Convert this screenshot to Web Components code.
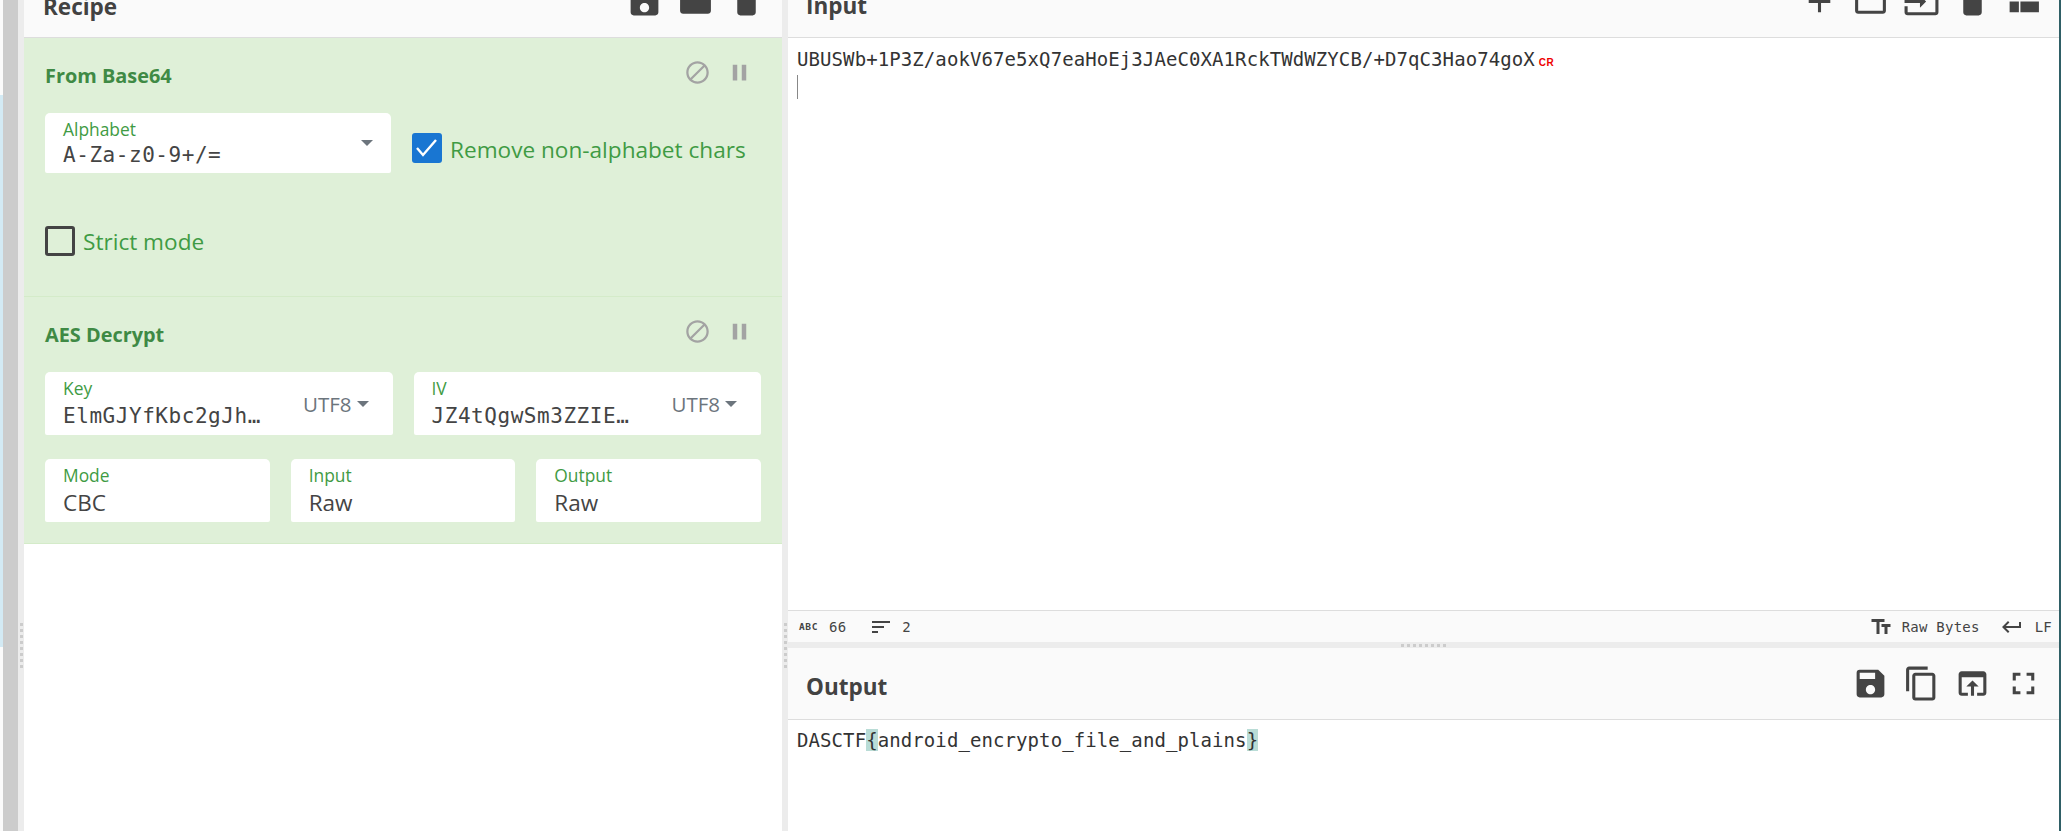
<!DOCTYPE html>
<html>
<head>
<meta charset="utf-8">
<title>CyberChef</title>
<style>
html,body{margin:0;padding:0;height:100%;overflow:hidden;background:#fff}
body{display:flex;width:2061px;height:831px;font-family:"Open Sans","Liberation Sans",sans-serif;color:#444}
</style>
</head>
<body>
<cc-edge></cc-edge>
<cc-gutter></cc-gutter>
<cc-recipe></cc-recipe>
<cc-gutter></cc-gutter>
<cc-io></cc-io>

<script>
// icon paths
const ICONS={
  save:"M17 3H5a2 2 0 0 0-2 2v14c0 1.1.9 2 2 2h14c1.1 0 2-.9 2-2V7l-4-4zm-5 16c-1.66 0-3-1.34-3-3s1.34-3 3-3 3 1.34 3 3-1.34 3-3 3zm3-10H5V5h10v4z",
  folder:"M10 4H4c-1.1 0-1.99.9-1.99 2L2 18c0 1.1.9 2 2 2h16c1.1 0 2-.9 2-2V8c0-1.1-.9-2-2-2h-8l-2-2z",
  trash:"M6 19c0 1.1.9 2 2 2h8c1.1 0 2-.9 2-2V7H6v12zM19 4h-3.5l-1-1h-5l-1 1H5v2h14V4z",
  add:"M19 13h-6v6h-2v-6H5v-2h6V5h2v6h6v2z",
  folderOpen:"M20 6h-8l-2-2H4c-1.1 0-1.99.9-1.99 2L2 18c0 1.1.9 2 2 2h16c1.1 0 2-.9 2-2V8c0-1.1-.9-2-2-2zm0 12H4V8h16v10z",
  input:"M21 3.01H3c-1.1 0-2 .9-2 2V9h2V4.99h18v14.03H3V15H1v4.01c0 1.1.9 1.98 2 1.98h18c1.1 0 2-.88 2-1.98v-14c0-1.1-.9-2-2-2zM11 16l4-4-4-4v3H1v2h10v3z",
  compact:"M3 19h6v-7H3v7zm7 0h12v-7H10v7zM3 5v6h19V5H3z",
  copy:"M16 1H4c-1.1 0-2 .9-2 2v14h2V3h12V1zm3 4H8c-1.1 0-2 .9-2 2v14c0 1.1.9 2 2 2h11c1.1 0 2-.9 2-2V7c0-1.1-.9-2-2-2zm0 16H8V7h11v14z",
  open:"M19 4H5c-1.11 0-2 .9-2 2v12c0 1.1.89 2 2 2h4v-2H5V8h14v10h-4v2h4c1.1 0 2-.9 2-2V6c0-1.1-.89-2-2-2zm-7 6l-4 4h3v6h2v-6h3l-4-4z",
  full:"M7 14H5v5h5v-2H7v-3zm-2-4h2V7h3V5H5v5zm12 7h-3v2h5v-5h-2v3zM14 5v2h3v3h2V5h-5z",
  disable:"M12 2C6.48 2 2 6.48 2 12s4.48 10 10 10 10-4.48 10-10S17.52 2 12 2zM4 12c0-4.42 3.58-8 8-8 1.85 0 3.55.63 4.9 1.69L5.69 16.9C4.63 15.55 4 13.85 4 12zm8 8c-1.85 0-3.55-.63-4.9-1.69L18.31 7.1C19.37 8.45 20 10.15 20 12c0 4.42-3.58 8-8 8z",
  pause:"M6 19h4V5H6v14zm8-14v14h4V5h-4z",
  lines:"M3 18h6v-2H3v2zM3 6v2h18V6H3zm0 7h12v-2H3v2z",
  textFields:"M2.5 4v3h5v12h3V7h5V4h-13zm19 5h-9v3h3v7h3v-7h3V9z",
  ret:"M19 7v4H5.83l3.58-3.59L8 6l-6 6 6 6 1.41-1.41L5.83 13H21V7z"
};

class CcIcon extends HTMLElement{
    connectedCallback(){
        const size=this.getAttribute("size")||37;
        const fill=this.getAttribute("fill")||"#444";
        this.attachShadow({mode:"open"}).innerHTML=`
        <style>:host{display:block;flex:none;width:${size}px;height:${size}px}svg{display:block}</style>
        <svg width="${size}" height="${size}" viewBox="0 0 24 24" fill="${fill}"><path d="${ICONS[this.getAttribute("name")]}"/></svg>`;
    }
}

// far left: the window behind the browser
class CcEdge extends HTMLElement{
    constructor(){
        super();
        this.attachShadow({mode:"open"}).innerHTML=`
        <style>
        :host{display:flex;flex:none;width:18px;height:831px}
        .stripe{width:3px;display:flex;flex-direction:column}
        .top{height:95px;background:#fbfbfb}
        .mid{height:552px;background:#d3eaf4}
        .low{flex:1;background:#fbfbfb}
        .bar{flex:1;background:#ccc}
        </style>
        <div class="stripe"><div class="top"></div><div class="mid"></div><div class="low"></div></div>
        <div class="bar"></div>`;
    }
}

class CcGutter extends HTMLElement{
    constructor(){
        super();
        this.attachShadow({mode:"open"}).innerHTML=`
        <style>
        :host{display:flex;flex:none;width:6px;height:831px;background:#ececec;align-items:flex-start;justify-content:center}
        .dots{margin-top:623px;width:3px;height:45px;background:repeating-linear-gradient(to bottom,#ccc 0 3px,transparent 3px 6px)}
        </style>
        <div class="dots"></div>`;
    }
}

// header bar of a panel, bottom aligned so the top can be cut by the window
class CcHeader extends HTMLElement{
    constructor(){
        super();
        this.attachShadow({mode:"open"}).innerHTML=`
        <style>
        :host{display:flex;flex:none;box-sizing:border-box;height:var(--h,38px);background:#fafafa;border-bottom:1px solid #ddd;overflow:hidden;
              justify-content:space-between;align-items:flex-end;padding:0 var(--pr,17px) 0 var(--pl,19px)}
        .title{font:700 22.5px/28px "Open Sans",sans-serif;color:#424242;margin-bottom:var(--tb,16px)}
        .btns{display:flex;gap:14px;margin-bottom:var(--ib,17px)}
        </style>
        <div class="title"><slot name="title"></slot></div>
        <div class="btns"><slot></slot></div>`;
    }
}

class CcField extends HTMLElement{
    constructor(){
        super();
        this.attachShadow({mode:"open"}).innerHTML=`
        <style>
        :host{display:flex;box-sizing:border-box;align-items:center;background:#fff;border-radius:5px 5px 2px 2px;padding:0 0 0 18px;height:var(--fh,63px);min-width:0}
        .txt{flex:1;min-width:0;display:flex;flex-direction:column;align-self:flex-start;padding-top:6px}
        label{font:400 17.4px/20px "Open Sans",sans-serif;color:#3f9b44}
        .val{font:400 22.5px/28px "Open Sans",sans-serif;color:#444;margin-top:var(--vm,4px);white-space:nowrap;overflow:hidden}
        :host([mono]) .val{font:400 21px/28px "DejaVu Sans Mono",monospace;letter-spacing:.55px}
        .trail{display:flex;align-items:center;flex:none;gap:5px;color:#6c757d;font:400 20.5px/28px "Open Sans",sans-serif}
        </style>
        <div class="txt"><label></label><div class="val"><slot></slot></div></div>
        <div class="trail"><slot name="trail"></slot></div>`;
        this.shadowRoot.querySelector("label").textContent=this.getAttribute("label");
    }
}

class CcCaret extends HTMLElement{
    constructor(){
        super();
        this.attachShadow({mode:"open"}).innerHTML=`
        <style>:host{display:block;width:0;height:0;border-left:6px solid transparent;border-right:6px solid transparent;border-top:6px solid #6c757d;margin-right:var(--cr,18px)}</style>`;
    }
}

class CcCheck extends HTMLElement{
    constructor(){
        super();
        const on=this.hasAttribute("checked");
        this.attachShadow({mode:"open"}).innerHTML=`
        <style>
        :host{display:flex;align-items:flex-start;gap:8px;color:#3f9b44;font:400 22.6px/30px "Open Sans",sans-serif;white-space:nowrap}
        .box{box-sizing:border-box;width:30px;height:30px;border-radius:3px;flex:none}
        .box.off{border:3px solid #444}
        .box.on{background:#1976d2}
        .lbl{padding-top:var(--lt,2px)}
        svg{display:block}
        </style>
        <div class="box ${on?"on":"off"}">${on?'<svg width="30" height="30" viewBox="0 0 30 30" fill="none" stroke="#fff" stroke-width="2.4"><path d="M5 15l6 7L24 7"/></svg>':''}</div>
        <div class="lbl"><slot></slot></div>`;
    }
}

class CcOperation extends HTMLElement{
    constructor(){
        super();
        this.attachShadow({mode:"open"}).innerHTML=`
        <style>
        :host{display:block;box-sizing:border-box;background:#dff0d8;border-bottom:1px solid #d4ebc9;padding:21px}
        .head{display:flex;justify-content:space-between;height:54px}
        .name{font:700 19.9px/34px "Open Sans",sans-serif;color:#3f8a45}
        .btns{display:flex;gap:15px;padding-right:8px}
        </style>
        <div class="head">
          <div class="name"></div>
          <div class="btns"><cc-icon name="disable" size="27" fill="#a3a3a3"></cc-icon><cc-icon name="pause" size="27" fill="#a3a3a3"></cc-icon></div>
        </div>
        <slot></slot>`;
        this.shadowRoot.querySelector(".name").textContent=this.getAttribute("name");
    }
}

class CcRow extends HTMLElement{
    constructor(){
        super();
        this.attachShadow({mode:"open"}).innerHTML=`
        <style>
        :host{display:grid;grid-template-columns:var(--tpl,repeat(2,1fr));column-gap:21px;margin-bottom:var(--mb,24px);align-items:var(--ai,stretch)}
        :host(:last-child){margin-bottom:0}
        </style>
        <slot></slot>`;
    }
}

class CcRecipe extends HTMLElement{
    constructor(){
        super();
        this.attachShadow({mode:"open"}).innerHTML=`
        <style>
        :host{display:flex;flex-direction:column;flex:none;width:758px;height:831px;background:#fff}
        </style>
        <cc-header><span slot="title">Recipe</span>
          <cc-icon name="save"></cc-icon><cc-icon name="folder"></cc-icon><cc-icon name="trash"></cc-icon>
        </cc-header>
        <cc-operation name="From Base64">
          <cc-row style="--mb:53px;--ai:start;--tpl:346px 1fr;height:60px">
            <cc-field label="Alphabet" mono style="--fh:60px;--vm:2px">A-Za-z0-9+/=<cc-caret slot="trail"></cc-caret></cc-field>
            <cc-check checked style="margin-top:20px">Remove non-alphabet chars</cc-check>
          </cc-row>
          <cc-row style="height:49px;--ai:start"><cc-check style="--lt:1px">Strict mode</cc-check></cc-row>
        </cc-operation>
        <cc-operation name="AES Decrypt">
          <cc-row>
            <cc-field label="Key" mono style="--vm:4px">ElmGJYfKbc2gJh…<span slot="trail">UTF8</span><cc-caret slot="trail" style="--cr:24px"></cc-caret></cc-field>
            <cc-field label="IV" mono style="--vm:4px">JZ4tQgwSm3ZZIE…<span slot="trail">UTF8</span><cc-caret slot="trail" style="--cr:24px"></cc-caret></cc-field>
          </cc-row>
          <cc-row style="--tpl:repeat(3,1fr)">
            <cc-field label="Mode">CBC</cc-field>
            <cc-field label="Input">Raw</cc-field>
            <cc-field label="Output">Raw</cc-field>
          </cc-row>
        </cc-operation>`;
    }
}

class CcStatus extends HTMLElement{
    constructor(){
        super();
        this.attachShadow({mode:"open"}).innerHTML=`
        <style>
        :host{display:flex;flex:none;box-sizing:border-box;height:32px;background:#fafafa;border-top:1px solid #ddd;align-items:center;justify-content:space-between;
              padding:0 7px 0 11px;font:400 14px/20px "DejaVu Sans Mono",monospace;letter-spacing:.24px;color:#444}
        .grp{display:flex;align-items:center}
        .abc{font:700 9.5px/10px "DejaVu Sans Mono",monospace;width:19px;letter-spacing:.6px;margin-right:11px}
        .n1{margin-right:23px}
        .n2{margin-left:9px}
        .rb{margin-left:9px;margin-right:20px}
        .lf{margin-left:11px}
        </style>
        <div class="grp">
          <span class="abc">ABC</span><span class="n1">66</span>
          <cc-icon name="lines" size="24"></cc-icon><span class="n2">2</span>
        </div>
        <div class="grp">
          <cc-icon name="textFields" size="24"></cc-icon><span class="rb">Raw Bytes</span>
          <cc-icon name="ret" size="24"></cc-icon><span class="lf">LF</span>
        </div>`;
    }
}

class CcIo extends HTMLElement{
    constructor(){
        super();
        this.attachShadow({mode:"open"}).innerHTML=`
        <style>
        :host{display:flex;flex-direction:column;flex:1;height:831px;box-sizing:border-box;border-right:2px solid #2f5f66;min-width:0;background:#fff}
        .editor{box-sizing:border-box;height:572px;padding:8px 9px 0;font:400 19px/26px "DejaVu Sans Mono",monospace;letter-spacing:.09px;color:#333;white-space:pre}
        .cr{color:#e00;font:700 10px/10px "Liberation Sans",sans-serif;margin-left:4px;letter-spacing:.5px}
        .caret{display:block;width:1px;height:24px;background:#888;margin-top:3px}
        .hgut{flex:none;height:6px;background:#ececec;display:flex;justify-content:center;align-items:center}
        .hgut i{display:block;width:45px;height:3px;background:repeating-linear-gradient(to right,#ccc 0 3px,transparent 3px 6px)}
        .out{flex:1;padding:8px 9px 0;font:400 19px/25px "DejaVu Sans Mono",monospace;letter-spacing:.09px;color:#333;white-space:pre}
        .hl{background:#b9dcd6}
        </style>
        <cc-header style="--pl:18px;--pr:17px;--tb:17px"><span slot="title">Input</span>
          <cc-icon name="add"></cc-icon><cc-icon name="folderOpen"></cc-icon><cc-icon name="input"></cc-icon><cc-icon name="trash"></cc-icon><cc-icon name="compact"></cc-icon>
        </cc-header>
        <div class="editor">UBUSWb+1P3Z/aokV67e5xQ7eaHoEj3JAeC0XA1RckTWdWZYCB/+D7qC3Hao74goX<span class="cr">CR</span>
<span class="caret"></span></div>
        <cc-status></cc-status>
        <div class="hgut"><i></i></div>
        <cc-header style="--h:72px;--pl:18px;--pr:17px;--tb:18px;--ib:17px"><span slot="title">Output</span>
          <cc-icon name="save"></cc-icon><cc-icon name="copy"></cc-icon><cc-icon name="open"></cc-icon><cc-icon name="full"></cc-icon>
        </cc-header>
        <div class="out">DASCTF<span class="hl">{</span>android_encrypto_file_and_plains<span class="hl">}</span></div>`;
    }
}

customElements.define("cc-icon",CcIcon);
customElements.define("cc-edge",CcEdge);
customElements.define("cc-gutter",CcGutter);
customElements.define("cc-header",CcHeader);
customElements.define("cc-caret",CcCaret);
customElements.define("cc-field",CcField);
customElements.define("cc-check",CcCheck);
customElements.define("cc-row",CcRow);
customElements.define("cc-operation",CcOperation);
customElements.define("cc-status",CcStatus);
customElements.define("cc-recipe",CcRecipe);
customElements.define("cc-io",CcIo);
</script>
</body>
</html>
